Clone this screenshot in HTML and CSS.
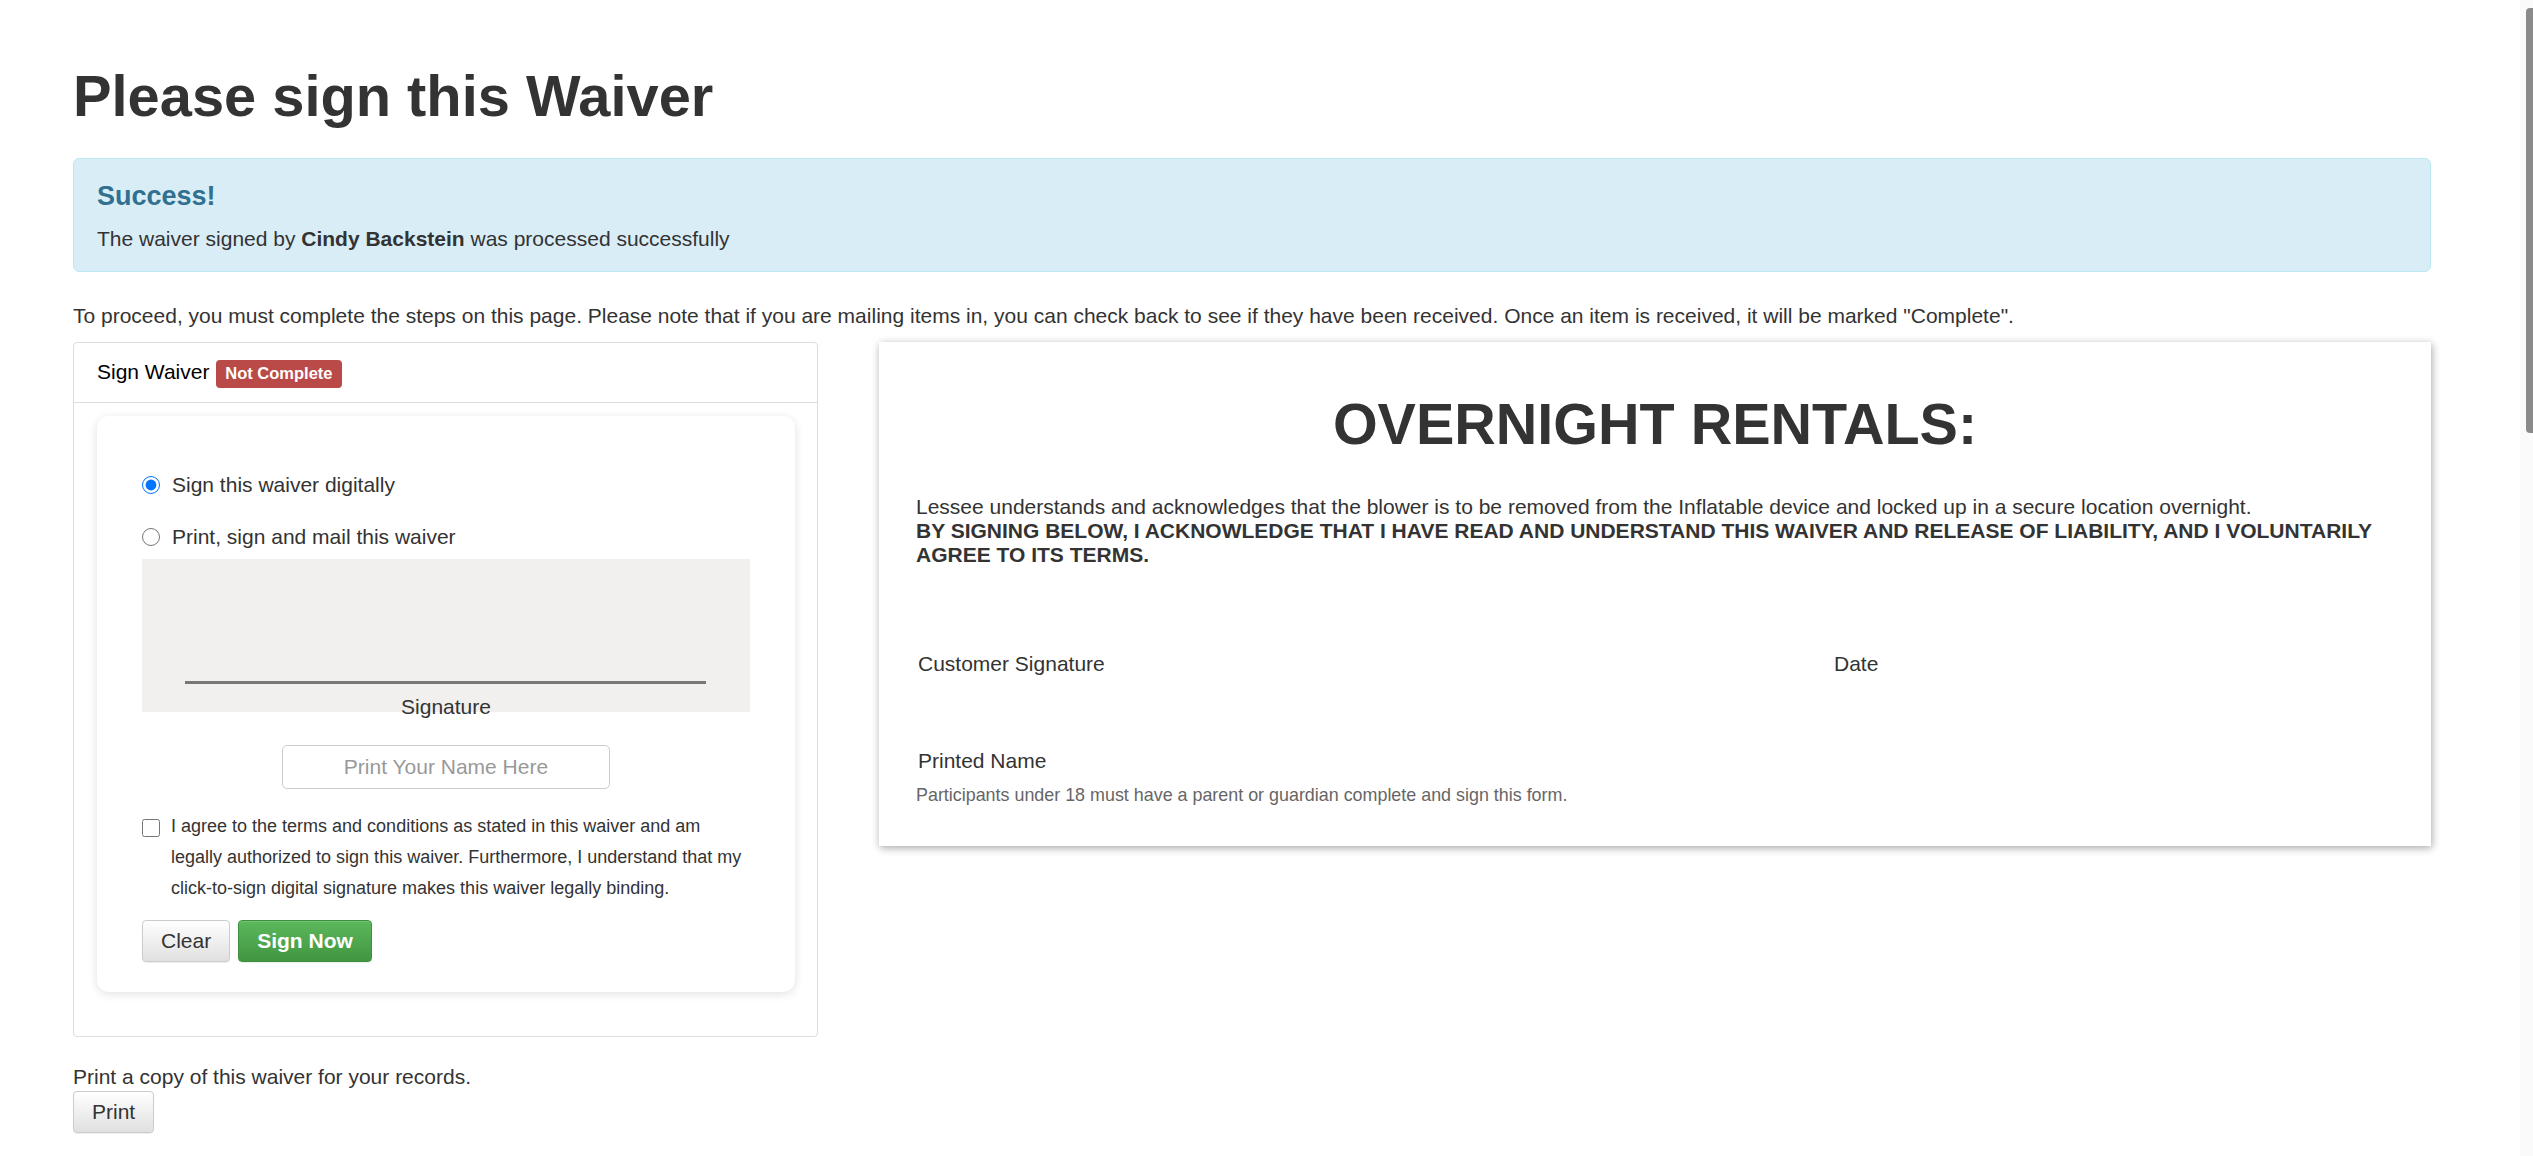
FILE: index.html
```html
<!DOCTYPE html>
<html>

<head>
    <meta charset="utf-8" />
    <title>Sign Waiver</title>
    <link rel="stylesheet" href="styles.css">
</head>

<body>
    <div class="container">
        <h1 class="page-title">Please sign this Waiver</h1>

        <div class="alert">
            <h4>Success!</h4>
            <p>The waiver signed by <b>Cindy Backstein</b> was processed successfully</p>
        </div>

        <p class="intro">To proceed, you must complete the steps on this page. Please note that if you are mailing items in, you can check back to see if they have been received. Once an item is received, it will be marked "Complete".</p>

        <div class="steps">
            <div class="panel">
                <div class="panel-heading">Sign Waiver <span class="label-danger">Not Complete</span></div>
                <div class="panel-body">
                    <div class="sign-card">
                        <div class="methods">
                            <label class="option"><input type="radio" name="method" checked /> Sign this waiver digitally</label>
                            <label class="option"><input type="radio" name="method" /> Print, sign and mail this waiver</label>
                        </div>
                        <div class="sig-pad">
                            <div class="sig-line"></div>
                        </div>
                        <div class="sig-label">Signature</div>
                        <input class="name-input" type="text" placeholder="Print Your Name Here" />
                        <label class="agree">
                            <input type="checkbox" />
                            <span>I agree to the terms and conditions as stated in this waiver and am legally authorized to sign this waiver. Furthermore, I understand that my click-to-sign digital signature makes this waiver legally binding.</span>
                        </label>
                        <div class="actions">
                            <button class="btn">Clear</button>
                            <button class="btn btn-success">Sign Now</button>
                        </div>
                    </div>
                </div>
            </div>

            <div class="waiver-doc">
                <h2>OVERNIGHT RENTALS:</h2>
                <p class="terms">Lessee understands and acknowledges that the blower is to be removed from the Inflatable device and locked up in a secure location overnight.<br />
                    <b>BY SIGNING BELOW, I ACKNOWLEDGE THAT I HAVE READ AND UNDERSTAND THIS WAIVER AND RELEASE OF LIABILITY, AND I VOLUNTARILY AGREE TO ITS TERMS.</b></p>
                <div class="sign-row">
                    <div>Customer Signature</div>
                    <div>Date</div>
                </div>
                <div class="printed">Printed Name</div>
                <p class="minor">Participants under 18 must have a parent or guardian complete and sign this form.</p>
            </div>
        </div>

        <p class="print-note">Print a copy of this waiver for your records.</p>
        <button class="btn">Print</button>
    </div>

    <!-- overlay scrollbar of the window -->
    <div class="scrollbar" aria-hidden="true">
        <div class="scrollbar-thumb"></div>
    </div>
</body>

</html>
```

FILE: styles.css
```css
body {
    margin: 0;
    font-family: "Liberation Sans", Arial, sans-serif;
    font-size: 21px;
    line-height: 30px;
    color: #333;
    background: #fff;
}

.container {
    width: 2358px;
    margin-left: 73px;
    padding: 65px 0 20px;
}

.page-title {
    font-size: 57.8px;
    line-height: 1.1;
    margin: 0 0 29px;
}

.alert {
    background: #d9edf7;
    border: 1px solid #bce8f1;
    border-radius: 6px;
    padding: 23px 23px 17px;
    margin-bottom: 29px;
}

.alert h4 {
    font-size: 27px;
    line-height: 1.1;
    margin: 0 0 13px;
    color: #31708f;
}

.alert p {
    margin: 0;
}

.intro {
    margin: 0 0 11px;
}

.steps {
    display: grid;
    grid-template-columns: 745px 1552px;
    column-gap: 61px;
    align-items: start;
}

/* left column */
.panel {
    border: 1px solid #ddd;
    border-radius: 4px;
}

.panel-heading {
    padding: 14px 23px;
    border-bottom: 1px solid #ddd;
    color: #000;
}

.label-danger {
    display: inline-block;
    background: #b94a48;
    color: #fff;
    font-size: 16.5px;
    font-weight: bold;
    line-height: 1;
    padding: 5px 9px 6px;
    border-radius: 4px;
    margin-left: 1px;
}

.panel-body {
    padding: 13px 22px 44px 23px;
}

.sign-card {
    border-radius: 12px;
    box-shadow: 0 2px 10px rgba(0, 0, 0, .12);
    padding: 54px 45px 30px;
}

.methods {
    display: flex;
    flex-direction: column;
    gap: 22px;
    margin-bottom: 7px;
}

.option {
    display: flex;
    align-items: center;
}

.option input {
    width: 18px;
    height: 18px;
    margin: 0 12px 0 0;
}

.sig-pad {
    height: 153px;
    box-sizing: border-box;
    padding-top: 122px;
    background: #f1f0ee;
}

.sig-line {
    height: 3px;
    margin: 0 44px 0 43px;
    background: #777;
}

.sig-label {
    margin-top: -20px;
    text-align: center;
}

.name-input {
    display: block;
    box-sizing: border-box;
    width: 328px;
    height: 44px;
    margin: 23px auto 0;
    border: 1px solid #ccc;
    border-radius: 5px;
    font: inherit;
    color: #333;
    text-align: center;
}

.name-input::placeholder {
    color: #999;
}

.agree {
    display: flex;
    align-items: flex-start;
    margin-top: 22px;
    font-size: 18px;
    line-height: 31px;
}

.agree input {
    flex: none;
    width: 18px;
    height: 18px;
    margin: 8px 11px 0 0;
}

.actions {
    display: flex;
    gap: 8px;
    margin-top: 16px;
}

.btn {
    font: inherit;
    line-height: 30px;
    padding: 5px 18px;
    color: #333;
    border: 1px solid #ccc;
    border-radius: 4px;
    background: linear-gradient(#fff, #e0e0e0);
    box-shadow: inset 0 1px 0 rgba(255, 255, 255, .15), 0 1px 1px rgba(0, 0, 0, .075);
}

.btn-success {
    color: #fff;
    font-weight: bold;
    border-color: #3e8f3e;
    background: linear-gradient(#5cb85c, #419641);
}

/* right column: the waiver itself */
.waiver-doc {
    box-sizing: border-box;
    height: 504px;
    padding: 51px 37px 0;
    box-shadow: 1px 2px 8px rgba(0, 0, 0, .35);
}

.waiver-doc h2 {
    margin: 0;
    font-size: 57.5px;
    line-height: 1.1;
    text-align: center;
}

.terms {
    margin: 38px 0 0;
    line-height: 24px;
}

.sign-row {
    display: grid;
    grid-template-columns: 916px 1fr;
    margin-top: 82px;
    padding-left: 2px;
}

.printed {
    margin-top: 67px;
    padding-left: 2px;
}

.minor {
    margin: 7px 0 0;
    font-size: 17.9px;
    line-height: 24px;
    color: #666;
}

.print-note {
    margin: 25px 0 0;
    line-height: 29px;
}

.scrollbar {
    position: fixed;
    top: 0;
    right: 0;
    width: 13px;
    height: 100%;
    background: #fafafa;
}

.scrollbar-thumb {
    position: absolute;
    top: 8px;
    right: 0;
    width: 7px;
    height: 425px;
    background: #8a8a8a;
    border-radius: 4px 0 0 4px;
}
```
